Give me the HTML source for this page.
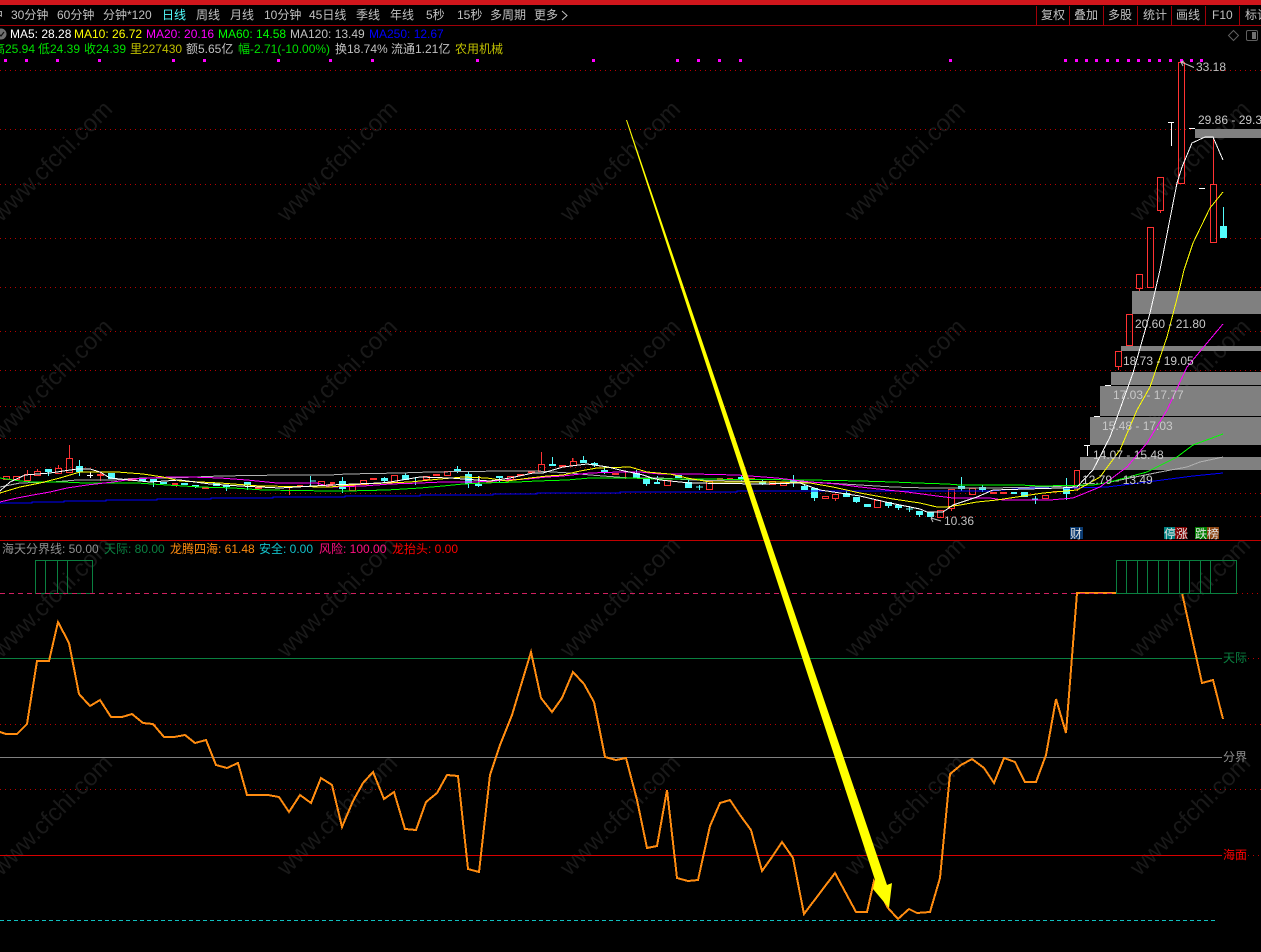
<!DOCTYPE html>
<html><head><meta charset="utf-8"><style>
html,body{margin:0;padding:0;background:#000;width:1261px;height:952px;overflow:hidden}
svg{display:block;position:absolute;left:0;top:0}
text{font-family:"Liberation Sans","WenQuanYi Zen Hei","Noto Sans CJK SC",sans-serif;font-size:12px;white-space:pre}
.w{font-size:24px;fill:#191919}
.t{fill:#c0c0c0}
.l{fill:#c8c8c8}
</style></head><body>
<svg width="1261" height="952" viewBox="0 0 1261 952" xmlns="http://www.w3.org/2000/svg">
<rect width="1261" height="952" fill="#000"/>
<!-- watermark -->
<g class="wm" text-anchor="middle">
<text class="w" transform="translate(52,161) rotate(-45)" y="8">www.cfchi.com</text>
<text class="w" transform="translate(337,161) rotate(-45)" y="8">www.cfchi.com</text>
<text class="w" transform="translate(620,161) rotate(-45)" y="8">www.cfchi.com</text>
<text class="w" transform="translate(905,161) rotate(-45)" y="8">www.cfchi.com</text>
<text class="w" transform="translate(1190,161) rotate(-45)" y="8">www.cfchi.com</text>
<text class="w" transform="translate(52,379) rotate(-45)" y="8">www.cfchi.com</text>
<text class="w" transform="translate(337,379) rotate(-45)" y="8">www.cfchi.com</text>
<text class="w" transform="translate(620,379) rotate(-45)" y="8">www.cfchi.com</text>
<text class="w" transform="translate(905,379) rotate(-45)" y="8">www.cfchi.com</text>
<text class="w" transform="translate(1190,379) rotate(-45)" y="8">www.cfchi.com</text>
<text class="w" transform="translate(52,597) rotate(-45)" y="8">www.cfchi.com</text>
<text class="w" transform="translate(337,597) rotate(-45)" y="8">www.cfchi.com</text>
<text class="w" transform="translate(620,597) rotate(-45)" y="8">www.cfchi.com</text>
<text class="w" transform="translate(905,597) rotate(-45)" y="8">www.cfchi.com</text>
<text class="w" transform="translate(1190,597) rotate(-45)" y="8">www.cfchi.com</text>
<text class="w" transform="translate(52,815) rotate(-45)" y="8">www.cfchi.com</text>
<text class="w" transform="translate(337,815) rotate(-45)" y="8">www.cfchi.com</text>
<text class="w" transform="translate(620,815) rotate(-45)" y="8">www.cfchi.com</text>
<text class="w" transform="translate(905,815) rotate(-45)" y="8">www.cfchi.com</text>
<text class="w" transform="translate(1190,815) rotate(-45)" y="8">www.cfchi.com</text>
</g>

<!-- header -->
<rect x="0" y="0" width="1261" height="5" fill="#d0161c"/>
<rect x="0" y="25" width="1261" height="1" fill="#a00008"/>
<g class="t">
<text x="-9" y="19">中</text>
<text x="11" y="19">30分钟</text><text x="57" y="19">60分钟</text><text x="103" y="19">分钟*120</text>
<text x="162" y="19" style="fill:#54fcfc">日线</text>
<text x="196" y="19">周线</text><text x="230" y="19">月线</text><text x="264" y="19">10分钟</text>
<text x="309" y="19">45日线</text><text x="356" y="19">季线</text><text x="390" y="19">年线</text>
<text x="426" y="19">5秒</text><text x="457" y="19">15秒</text><text x="490" y="19">多周期</text><text x="534" y="19">更多</text>
<text x="1041" y="19">复权</text><text x="1074" y="19">叠加</text><text x="1108" y="19">多股</text><text x="1143" y="19">统计</text><text x="1176" y="19">画线</text><text x="1212" y="19">F10</text><text x="1245" y="19">标记</text>
</g>
<path d="M562 11l5 4.500-5 4.500" fill="none" stroke="#c0c0c0"/>
<path d="M1036.500 6v19M1069.500 6v19M1103.500 6v19M1137.500 6v19M1171.500 6v19M1205.500 6v19M1239.500 6v19" stroke="#a00008" shape-rendering="crispEdges"/>

<!-- top-right icons -->
<path d="M1233.500 30.500l5 5-5 5-5-5z" fill="none" stroke="#606060"/>
<rect x="1246.500" y="30.500" width="11" height="10" rx="1.500" fill="none" stroke="#606060"/>
<rect x="1252" y="32" width="4" height="7" fill="#707070"/>

<!-- info lines -->
<circle cx="1" cy="34" r="5.500" fill="#707070"/>
<path d="M-1 34l2 2 3-4" fill="none" stroke="#111" stroke-width="1.200"/>
<text x="10" y="38" style="fill:#fff">MA5: 28.28</text>
<text x="74" y="38" style="fill:#ffff00">MA10: 26.72</text>
<text x="146" y="38" style="fill:#ff00ff">MA20: 20.16</text>
<text x="218" y="38" style="fill:#00ff00">MA60: 14.58</text>
<text x="290" y="38" style="fill:#c0c0c0">MA120: 13.49</text>
<text x="369" y="38" style="fill:#0000ff">MA250: 12.67</text>
<g style="fill:#00e000">
<text x="-7" y="53" style="fill:#00e000">高25.94</text>
<text x="38" y="53" style="fill:#00e000">低24.39</text>
<text x="84" y="53" style="fill:#00e000">收24.39</text>
<text x="238" y="53" style="fill:#00e000">幅-2.71(-10.00%)</text>
</g>
<text x="130" y="53" style="fill:#c0c000">里227430</text>
<text x="186" y="53" class="t">额5.65亿</text>
<text x="335" y="53" class="t">换18.74%</text>
<text x="391" y="53" class="t">流通1.21亿</text>
<text x="455" y="53" style="fill:#c0c000">农用机械</text>

<!-- magenta dots -->
<path fill="#ff00ff" d="M4 59h3v3h-3zM25 59h3v3h-3zM56 59h3v3h-3zM98 59h3v3h-3zM172 59h3v3h-3zM203 59h3v3h-3zM277 59h3v3h-3zM329 59h3v3h-3zM371 59h3v3h-3zM476 59h3v3h-3zM592 59h3v3h-3zM676 59h3v3h-3zM697 59h3v3h-3zM718 59h3v3h-3zM739 59h3v3h-3zM949 59h3v3h-3zM1064 59h3v3h-3zM1075 59h3v3h-3zM1085 59h3v3h-3zM1095 59h3v3h-3zM1106 59h3v3h-3zM1116 59h3v3h-3zM1127 59h3v3h-3zM1137 59h3v3h-3zM1148 59h3v3h-3zM1158 59h3v3h-3zM1169 59h3v3h-3zM1180 59h3v3h-3zM1190 59h3v3h-3zM1200 59h3v3h-3z"/>

<!-- dotted grid -->
<g stroke="#b80000" stroke-dasharray="1 4" shape-rendering="crispEdges">
<path d="M0 70.500H1261M0 129.500H1261M0 184.500H1261M0 238.500H1261M0 287.500H1261M0 331.500H1261M0 370.500H1261M0 406.500H1261M0 438.500H1261M0 467.500H1261M0 493.500H1261M0 516.500H1261M0 724.500H1261M0 789.500H1261M1237 593.500H1261M1248 658.500H1261M1248 855.500H1261"/>
</g>

<!-- grey volume-profile boxes -->
<g fill="#808080">
<rect x="1195" y="129" width="66" height="9"/>
<rect x="1132" y="291" width="129" height="23"/>
<rect x="1121" y="346" width="140" height="5"/>
<rect x="1111" y="372" width="150" height="13"/>
<rect x="1100" y="386" width="161" height="30"/>
<rect x="1090" y="417" width="171" height="28"/>
<rect x="1080" y="457" width="181" height="13"/>
</g>

<!-- candles -->
<path stroke="#54fcfc" fill="none" shape-rendering="crispEdges" d="M79.500 460v16M48.500 472v4M153.500 482v5M195.500 485v3M226.500 487v4M247.500 485v5M310.500 476v10M342.500 477v16M384.500 477v6M405.500 473v6M415.500 477v8M457.500 466v7M468.500 472v16M478.500 476v11M499.500 478v5M552.500 457v9M583.500 456v7M594.500 462v5M604.500 466v8M636.500 470v4M646.500 479v7M657.500 476v6M688.500 480v8M699.500 485v5M741.500 475v6M762.500 480v5M793.500 475v12M804.500 484v6M814.500 488v13M846.500 490v7M856.500 497v6M888.500 502v6M898.500 505v5M909.500 506v6M919.500 511v6M961.500 477v14M982.500 485v7M1035.500 496v8M1066.500 478v22M310 481h6M696 487h7M790 481h7M906 509h7M1032 499h6M475 485h7M307 483h7"/>
<path fill="#54fcfc" d="M76 466h7v6h-7zM45 469h7v3h-7zM108 473h7v6h-7zM139 479h7v2h-7zM150 479h7v3h-7zM160 482h7v2h-7zM181 483h7v2h-7zM192 485h7v2h-7zM213 483h7v3h-7zM223 485h7v2h-7zM244 482h7v3h-7zM339 481h7v8h-7zM381 478h7v3h-7zM402 475h7v5h-7zM454 469h7v2h-7zM465 474h7v10h-7zM475 484h7v2h-7zM496 476h7v2h-7zM549 464h7v2h-7zM580 460h7v3h-7zM591 463h7v2h-7zM601 470h7v2h-7zM633 473h7v5h-7zM643 479h7v5h-7zM654 482h6v2h-6zM675 475h7v3h-7zM685 482h7v6h-7zM738 477h6v3h-6zM759 481h7v3h-7zM801 486h7v4h-7zM811 488h7v10h-7zM843 493h7v4h-7zM853 497h7v5h-7zM864 504h7v3h-7zM885 502h7v4h-7zM895 505h7v3h-7zM916 511h7v4h-7zM927 512h7v5h-7zM958 486h7v3h-7zM979 487h7v3h-7zM1011 492h6v2h-6zM1021 492h7v5h-7zM1063 487h7v7h-7zM1220 226h7v12h-7z"/>
<path stroke="#54fcfc" fill="none" d="M1223.500 207v19" shape-rendering="crispEdges"/>
<path stroke="#fff" fill="none" shape-rendering="crispEdges" d="M87 475.500h6M90.500 472v6M1168 122.500h6M1171.500 122v24M1189 128.500h6M1199 188.500h6M1105 385.500h6M1094 416.500h6M1084 445.500h6M1087.500 445v11"/>
<g fill="none" stroke="#ff3232" shape-rendering="crispEdges">
<path d="M3.500 476.500h6v3h-6zM13.500 476.500h6v3h-6zM24.500 474.500h6v6h-6zM34.500 471.500h6v4h-6zM55.500 468.500h6v5h-6zM66.500 458.500h6v14h-6zM318.500 481.500h6v4h-6zM349.500 485.500h6v5h-6zM360.500 480.500h6v4h-6zM391.500 475.500h6v7h-6zM423.500 476.500h6v3h-6zM444.500 471.500h6v4h-6zM507.500 476.500h6v3h-6zM538.500 464.500h6v7h-6zM570.500 461.500h6v4h-6zM664.500 480.500h6v5h-6zM706.500 481.500h6v8h-6zM769.500 481.500h6v3h-6zM780.500 482.500h6v3h-6zM822.500 496.500h6v2h-6zM832.500 494.500h6v4h-6zM874.500 500.500h6v7h-6zM937.500 510.500h6v7h-6zM948.500 489.500h6v19h-6zM969.500 488.500h6v6h-6zM1042.500 495.500h6v3h-6z"/>
<path d="M1074.500 470.500h5v18h-5zM1115.500 351.500h6v15h-6zM1126.500 314.500h6v31h-6zM1136.500 274.500h6v14h-6zM1147.500 227.500h6v60h-6zM1157.500 177.500h6v33h-6zM1178.500 62.500h6v121h-6zM1210.500 184.500h6v58h-6z"/>
<path d="M69.500 445v13M58.500 465v3M27.500 470v4M37.500 469v2M100.500 472v9M541.500 452v12M176.500 483v4M835.500 498v3M951.500 508v3M1213.500 138v46M1118.500 367v3M1139.500 289v2M1160.500 211v2M479.500 476v8M572.500 458v3M1077.500 489v2M289.500 486v9M573 458v3M625.500 472v7"/>
</g>
<path fill="#ff3232" d="M97 474h7v2h-7zM128 478h8v3h-8zM172 483h6v2h-6zM202 487h7v2h-7zM255 487h7v2h-7zM297 485h6v2h-6zM328 484h5v2h-5zM330 482h5v2h-5zM370 478h7v2h-7zM433 474h7v2h-7zM486 481h7v2h-7zM517 474h7v2h-7zM528 471h7v2h-7zM559 465h7v2h-7zM612 473h7v2h-7zM717 478h6v2h-6zM727 478h6v2h-6zM748 478h7v2h-7zM990 492h7v2h-7zM1000 492h7v2h-7zM1053 491h7v1h-7z"/>

<!-- MAs -->
<g fill="none" shape-rendering="crispEdges" stroke-width="1">
<polyline stroke="#0000ff" points="0,503 32,503 32,502 64,502 64,501 106,501 106,500 157,500 157,499 211,499 211,498 273,498 273,497 345,497 345,496 420,496 420,495 493,495 493,494 537,494 537,493 620,493 620,492 737,492 737,491 990,491 1027,488 1073,488 1107,487 1147,482 1193,476 1223,473"/>
<polyline stroke="#b0b0b0" points="0,487 20,483 53,482 77,480 113,480 143,478 170,478 220,476 283,475 330,475 347,474 400,473 430,472 505,471 537,471 570,473 590,475 630,478 660,478 693,480 777,482 810,482 860,485 893,487 927,488 990,488 1043,487 1093,485 1110,482 1160,472 1187,467 1200,462 1223,457"/>
<polyline stroke="#00ff00" points="0,478 20,481 33,482 63,482 85,483 110,483 137,483 167,485 200,487 233,488 263,490 330,491 347,491 387,490 420,488 443,486 463,484 483,483 517,482 537,481 567,480 590,478 630,478 658,479 693,479 810,480 860,481 893,482 917,483 947,484 960,485 1020,485 1040,486 1093,485 1110,482 1147,472 1177,457 1193,445 1223,434"/>
<polyline stroke="#ff00ff" points="0,502 17,498 33,495 50,492 67,488 87,485 113,482 133,479 170,477 190,477 220,478 247,480 277,483 317,483 330,487 363,486 390,484 420,483 443,482 473,482 493,481 527,479 547,477 563,476 590,473 620,472 640,472 660,474 693,474 737,475 777,478 810,482 837,484 860,487 887,490 907,492 937,496 953,498 990,498 1003,500 1050,500 1073,498 1100,487 1127,467 1147,443 1167,410 1187,367 1207,343 1223,324"/>
<polyline stroke="#ffff00" points="0,493 20,487 40,483 60,478 80,472 117,472 143,474 163,477 180,481 200,482 220,483 260,486 330,487 363,484 387,483 410,482 440,479 463,477 487,478 507,481 530,478 547,476 563,475 580,471 597,468 630,467 647,472 658,473 670,474 687,478 710,482 743,482 777,482 810,483 833,487 860,493 893,499 920,503 937,507 947,507 960,505 977,502 997,500 1043,493 1077,490 1100,477 1120,450 1137,410 1150,387 1167,337 1180,287 1184,270 1193,243 1210,208 1223,192"/>
<polyline stroke="#ffffff" points="0,491 10,482 25,475 50,473 77,469 90,469 100,472 110,478 150,482 180,480 210,484 240,486 280,488 330,485 380,483 390,482 420,477 450,478 490,481 510,478 533,473 543,473 563,467 587,464 608,467 620,470 643,475 652,478 660,480 690,483 760,484 800,483 820,490 840,493 860,496 890,503 920,509 927,512 943,512 953,505 977,497 993,490 1060,488 1077,487 1093,470 1110,437 1133,373 1150,313 1160,270 1177,183 1182,167 1192,143 1205,137 1213,137 1223,160"/>
</g>

<!-- price labels -->
<path d="M1181 62l6 2.500 7 3M1181 62l3-1M1181 62l2 4" fill="none" stroke="#c0c0c0"/>
<text x="1196" y="71" class="t">33.18</text>
<text x="1198" y="124" class="l">29.86 - 29.38</text>
<text x="1135" y="328" class="l">20.60 - 21.80</text>
<text x="1123" y="365" class="l">18.73 - 19.05</text>
<text x="1113" y="399" class="l">17.03 - 17.77</text>
<text x="1102" y="430" class="l">15.48 - 17.03</text>
<text x="1093" y="459" class="l">14.07 - 15.48</text>
<text x="1082" y="484" class="l">12.79 - 13.49</text>
<text x="944" y="525" class="t">10.36</text>
<path d="M931 518l10 3M931 518l3-3M931 518l2 4" fill="none" stroke="#c0c0c0"/>

<!-- badges -->
<rect x="1070" y="527" width="13" height="12" fill="#0a3a70"/>
<text x="1070" y="538" style="fill:#e0e0e0">财</text>
<rect x="1164" y="527" width="11" height="12" fill="#008080"/>
<rect x="1175" y="527" width="12" height="12" fill="#800000"/>
<text x="1164" y="538" style="fill:#e0e0e0">停涨</text>
<rect x="1195" y="527" width="12" height="12" fill="#008000"/>
<rect x="1207" y="527" width="12" height="12" fill="#8b4513"/>
<text x="1195" y="538" style="fill:#e0e0e0">跌榜</text>

<!-- separator -->
<rect x="0" y="540" width="1261" height="1" fill="#c00000"/>

<!-- indicator legend -->
<text x="2" y="553" style="fill:#909090">海天分界线: 50.00</text>
<text x="104" y="553" style="fill:#0a8040">天际: 80.00</text>
<text x="170" y="553" style="fill:#ff8c10">龙腾四海: 61.48</text>
<text x="259" y="553" style="fill:#14c0c8">安全: 0.00</text>
<text x="319" y="553" style="fill:#ff1080">风险: 100.00</text>
<text x="392" y="553" style="fill:#ff0000">龙抬头: 0.00</text>

<!-- indicator lines -->
<g shape-rendering="crispEdges">
<path d="M0 658.500H1222" stroke="#0a8040"/>
<path d="M0 757.500H1222" stroke="#808080"/>
<path d="M0 855.500H1222" stroke="#d80000"/>
<path d="M0 920.500H1216" stroke="#10c0c0" stroke-dasharray="4 3"/>
</g>
<text x="1223" y="662" style="fill:#0a8040">天际</text>
<text x="1223" y="761" style="fill:#909090">分界</text>
<text x="1223" y="859" style="fill:#ff0000">海面</text>

<!-- indicator orange -->
<g fill="none" stroke="#ff8c10" stroke-width="2" stroke-linejoin="miter" shape-rendering="crispEdges">
<polyline points="0,732 6,734 17,734 27,724 37,661 49,661 58,622 69,643 79,694 90,706 100,700 111,717 122,717 132,714 143,723 153,724 164,737 174,737 185,735 195,743 206,740 216,765 227,768 238,763 247,795 268,795 279,797 289,812 300,795 311,803 321,778 332,785 342,827 353,801 363,783 373,772 384,799 394,792 405,829 416,830 426,802 437,793 447,775 458,776 468,869 479,872 490,775 500,745 512,715 531,652 541,698 552,712 562,698 573,672 584,684 594,702 605,757 616,760 626,758 637,800 647,848 657,846 667,790 677,878 688,881 698,880 710,826 720,803 730,800 740,815 751,830 762,871 772,857 782,842 793,858 804,914 835,873 856,912 867,912 874,881 888,908 898,919 909,909 917,913 930,912 940,878 950,774 961,765 972,759 984,768 994,783 1004,758 1015,762 1025,782 1036,782 1046,755 1056,699 1066,733 1077,593 1116,593"/>
<polyline points="1182,593 1202,683 1213,680 1223,719"/>
</g>

<!-- hatch boxes -->
<g fill="none" stroke="#0a8040" shape-rendering="crispEdges">
<path d="M35.500 560.500H92.500V593.500H35.500ZM45.500 560.500V593M57.500 560.500V593M67.500 560.500V593"/>
<path d="M1116.500 560.500H1236.500V593.500H1116.500ZM1126.500 560.500V593M1137.500 560.500V593M1147.500 560.500V593M1158.500 560.500V593M1168.500 560.500V593M1179.500 560.500V593M1189.500 560.500V593M1200.500 560.500V593M1210.500 560.500V593"/>
</g>
<path d="M0 593.500H1116" stroke="#d02060" stroke-dasharray="5 4" shape-rendering="crispEdges"/>

<!-- big yellow arrow -->
<polygon fill="#ffff00" points="626,120 627,120 887,885 892,883 889,908 873,889 875,880"/>
</svg>
</body></html>
